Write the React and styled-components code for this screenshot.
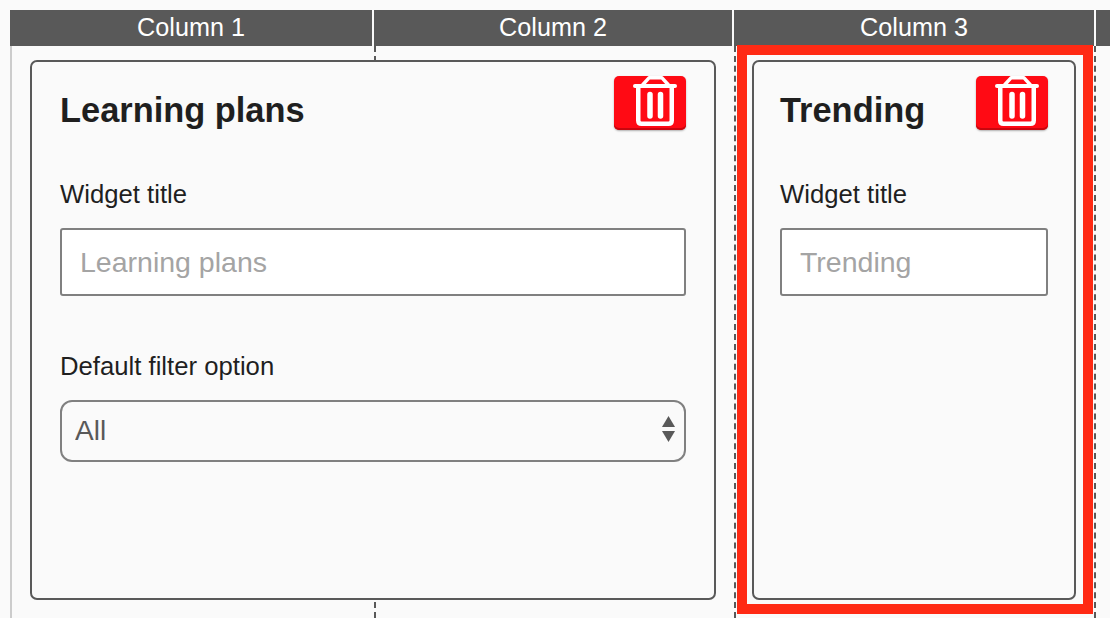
import React from "react";
import styled, { createGlobalStyle } from "styled-components";

const GlobalStyle = createGlobalStyle`
  html, body {
    margin: 0;
    height: 618px;
    overflow: hidden;
    background: #fafafa;
    font-family: "Liberation Sans", Arial, sans-serif;
  }
`;

const Page = styled.div`
  box-sizing: border-box;
  width: 1110px;
  height: 618px;
  padding: 10px 0 0 10px;
  overflow: hidden;
`;

const HeaderRow = styled.div`
  display: grid;
  grid-template-columns: 364px 360px 362px 14px;
  height: 36px;
  background: #595959;
`;

const HeaderCell = styled.div`
  box-sizing: border-box;
  border-right: 2px solid #fafafa;
  color: #fff;
  font-size: 25.2px;
  line-height: 35px;
  text-align: center;
  &:last-child {
    border-right: 0;
  }
`;

const Board = styled.div`
  display: grid;
  grid-template-columns: 364px 360px 360px 16px;
  grid-template-rows: 572px;
`;

const Guide = styled.div`
  grid-row: 1;
  grid-column: ${(p) => p.$col};
  border-left: ${(p) =>
    p.$first ? "2px solid #cccccc" : "2px dashed #595959"};
`;

const Slot = styled.div`
  grid-row: 1;
  grid-column: ${(p) => p.$col};
  z-index: 1;
  display: flex;
  box-sizing: border-box;
  padding: 14px 18px 18px 20px;
`;

const SelectedSlot = styled(Slot)`
  margin: -1px 1px 4px 3px;
  padding: 5px 7px 4px 5px;
  border: 10px solid #ff2a14;
`;

const Card = styled.section`
  flex: 1;
  min-width: 0;
  box-sizing: border-box;
  padding: 14px ${(p) => (p.$wide ? "28px" : "26px")} 0;
  background: #fafafa;
  border: 2px solid #595959;
  border-radius: 7px;
`;

const TitleRow = styled.div`
  display: flex;
  justify-content: space-between;
  align-items: flex-start;
  height: 54px;
`;

const Title = styled.h2`
  margin: 14px 0 0;
  color: #1f1f1f;
  font-size: 34.4px;
  line-height: 40px;
  font-weight: 700;
`;

const DeleteButton = styled.button`
  flex: none;
  width: 72px;
  height: 54px;
  padding: 0;
  background: #ff0a14;
  border: 0;
  border-radius: 5px;
  box-shadow: inset 0 -2px 0 #c8060e, 0 1px 2px rgba(0, 0, 0, 0.3);
  svg {
    display: block;
  }
`;

const Field = styled.div`
  margin-top: ${(p) => p.$gap}px;
`;

const Label = styled.label`
  display: block;
  height: 28px;
  margin-bottom: 20px;
  color: #1f1f1f;
  font-size: 25.7px;
  line-height: 28px;
`;

const TextInput = styled.input`
  display: block;
  box-sizing: border-box;
  width: 100%;
  height: 68px;
  padding: 1px 18px 0;
  background: #fff;
  border: 2px solid #808080;
  border-radius: 3px;
  outline: 0;
  color: #595959;
  font: 28.5px "Liberation Sans", Arial, sans-serif;
  &::placeholder {
    color: #a4a4a4;
    opacity: 1;
  }
`;

const SelectWrap = styled.div`
  position: relative;
  svg {
    position: absolute;
    top: 16px;
    right: 11px;
    pointer-events: none;
  }
`;

const Select = styled.select`
  display: block;
  box-sizing: border-box;
  width: 100%;
  height: 62px;
  padding: 0 13px 2px;
  appearance: none;
  background: #fafafa;
  border: 2px solid #808080;
  border-radius: 12px;
  outline: 0;
  color: #595959;
  font: 28px "Liberation Sans", Arial, sans-serif;
`;

const TrashIcon = () => (
  <svg width="72" height="54" viewBox="0 0 72 54" fill="none" stroke="#fff">
    <path d="M28.5 9 L35 1.8 H48 L54.5 9" strokeWidth="3.5" strokeLinejoin="round" />
    <path d="M21 10 H61" strokeWidth="4" strokeLinecap="round" />
    <path d="M24.25 10 V44.5 Q24.25 47.75 27.5 47.75 H54.5 Q57.75 47.75 57.75 44.5 V10" strokeWidth="4.5" />
    <path d="M36 18.5 V40 M46.5 18.5 V40" strokeWidth="5.5" strokeLinecap="round" />
  </svg>
);

const SortArrows = () => (
  <svg width="13" height="26" viewBox="0 0 13 26" fill="#595959">
    <path d="M6.5 0 L13 11 H0 Z" />
    <path d="M0 15 H13 L6.5 26 Z" />
  </svg>
);

const DeleteWidget = () => (
  <DeleteButton aria-label="Delete widget">
    <TrashIcon />
  </DeleteButton>
);

export default function App() {
  return (
    <>
      <GlobalStyle />
      <Page>
        <HeaderRow>
          <HeaderCell>Column 1</HeaderCell>
          <HeaderCell>Column 2</HeaderCell>
          <HeaderCell>Column 3</HeaderCell>
          <HeaderCell />
        </HeaderRow>
        <Board>
          <Guide $col={1} $first />
          <Guide $col={2} />
          <Guide $col={3} />
          <Guide $col={4} />

          <Slot $col="1 / 3">
            <Card $wide>
              <TitleRow>
                <Title>Learning plans</Title>
                <DeleteWidget />
              </TitleRow>
              <Field $gap={50}>
                <Label>Widget title</Label>
                <TextInput placeholder="Learning plans" />
              </Field>
              <Field $gap={56}>
                <Label>Default filter option</Label>
                <SelectWrap>
                  <Select defaultValue="all">
                    <option value="all">All</option>
                  </Select>
                  <SortArrows />
                </SelectWrap>
              </Field>
            </Card>
          </Slot>

          <SelectedSlot $col={3}>
            <Card>
              <TitleRow>
                <Title>Trending</Title>
                <DeleteWidget />
              </TitleRow>
              <Field $gap={50}>
                <Label>Widget title</Label>
                <TextInput placeholder="Trending" />
              </Field>
            </Card>
          </SelectedSlot>
        </Board>
      </Page>
    </>
  );
}
